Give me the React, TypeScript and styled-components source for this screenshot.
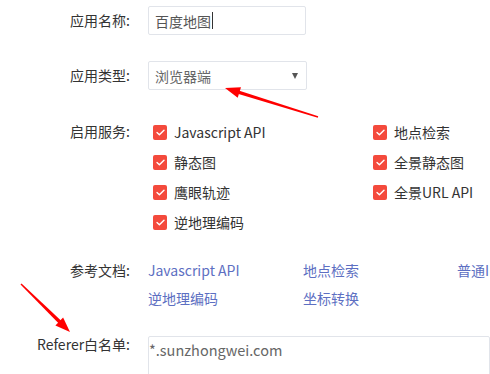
import React from 'react';
import styled, { createGlobalStyle } from 'styled-components';

const GlobalStyle = createGlobalStyle`
  html, body {
    margin: 0;
    padding: 0;
    background: #fff;
    overflow: hidden;
  }
  body {
    font-family: "Noto Sans CJK SC", "Noto Sans", sans-serif;
    font-size: 14px;
    color: #333;
  }
`;

// Layout
const Page = styled.div`
  position: relative;
  width: 490px;
  height: 374px;
  overflow: hidden;
`;

const Form = styled.div`
  display: flex;
  flex-direction: column;
  padding-top: 6px;
`;

const Row = styled.div<{ $gap?: number }>`
  display: flex;
  align-items: flex-start;
  gap: 18px;
  margin-top: ${p => p.$gap ?? 0}px;
`;

const Label = styled.div<{ $lh: number }>`
  width: 130px;
  flex-shrink: 0;
  text-align: right;
  line-height: ${p => p.$lh}px;
  color: #333;
  white-space: nowrap;
`;

// Controls
const TextBox = styled.div`
  box-sizing: border-box;
  width: 158px;
  height: 29px;
  border: 1px solid #e1e4ea;
  border-radius: 2px;
  padding: 0 6px;
  display: flex;
  align-items: center;
  color: #555;
`;

const Caret = styled.span`
  display: inline-block;
  width: 1px;
  height: 17px;
  background: #333;
  margin-left: 1px;
`;

const SelectBox = styled(TextBox)`
  width: 159px;
  justify-content: space-between;
  color: #666;
  padding-right: 8px;
`;

const SelectArrow = styled.span`
  width: 0;
  height: 0;
  border-left: 3.5px solid transparent;
  border-right: 3.5px solid transparent;
  border-top: 6px solid #555;
`;

const CheckGrid = styled.div`
  display: grid;
  grid-template-columns: 220px 120px;
  grid-auto-rows: 30px;
  padding-left: 5px;
`;

const CheckItem = styled.label`
  display: flex;
  align-items: center;
  gap: 7px;
  color: #333;
  white-space: nowrap;
`;

const CheckBox = styled.span`
  width: 14px;
  height: 15px;
  border-radius: 2px;
  background: #f44a3c;
  display: flex;
  align-items: center;
  justify-content: center;
`;

const LinkGrid = styled.div`
  display: grid;
  grid-template-columns: 155px 154px 155px;
  grid-auto-rows: 28px;
`;

const DocLink = styled.a`
  color: #5d6fc2;
  text-decoration: none;
  line-height: 28px;
  white-space: nowrap;
`;

const TextArea = styled.div`
  box-sizing: border-box;
  width: 400px;
  height: 80px;
  border: 1px solid #e1e4ea;
  border-radius: 2px;
  padding: 2px 0 0 0;
  color: #666;
  font-size: 14.5px;
  line-height: 22px;
`;

// Annotation arrows drawn over the page
const Overlay = styled.svg`
  position: absolute;
  left: 0;
  top: 0;
  pointer-events: none;
`;

const Check = () => (
  <svg width="9" height="7" viewBox="0 0 9 7">
    <path d="M1 3.6 L3.4 5.8 L8 1.2" fill="none" stroke="#fff" strokeWidth="1.4" strokeLinecap="round" strokeLinejoin="round" />
  </svg>
);

type Pt = [number, number];

const Arrow = ({ from, to }: { from: Pt; to: Pt }) => {
  const dx = to[0] - from[0];
  const dy = to[1] - from[1];
  const len = Math.hypot(dx, dy);
  const ux = dx / len;
  const uy = dy / len;
  const px = -uy;
  const py = ux;
  const head = 15;
  const bx = to[0] - ux * head;
  const by = to[1] - uy * head;
  const pts = (arr: Pt[]) => arr.map(p => p.map(v => v.toFixed(1)).join(',')).join(' ');
  const shaft: Pt[] = [
    [from[0] + px * 0.7, from[1] + py * 0.7],
    [bx + ux * 2 + px * 1.8, by + uy * 2 + py * 1.8],
    [bx + ux * 2 - px * 1.8, by + uy * 2 - py * 1.8],
    [from[0] - px * 0.7, from[1] - py * 0.7],
  ];
  const tip: Pt[] = [
    to,
    [bx + px * 5.5, by + py * 5.5],
    [bx - px * 5.5, by - py * 5.5],
  ];
  return (
    <g fill="#ff0000">
      <polygon points={pts(shaft)} />
      <polygon points={pts(tip)} />
    </g>
  );
};

const services = [
  'Javascript API', '地点检索',
  '静态图', '全景静态图',
  '鹰眼轨迹', '全景URL API',
  '逆地理编码',
];

const docs = ['Javascript API', '地点检索', '普通IP定位', '逆地理编码', '坐标转换'];

const App: React.FC = () => {
  return (
    <Page>
      <GlobalStyle />
      <Form>
        <Row>
          <Label $lh={29}>应用名称:</Label>
          <TextBox>
            百度地图
            <Caret />
          </TextBox>
        </Row>

        <Row $gap={26}>
          <Label $lh={29}>应用类型:</Label>
          <SelectBox>
            浏览器端
            <SelectArrow />
          </SelectBox>
        </Row>

        <Row $gap={27}>
          <Label $lh={28}>启用服务:</Label>
          <CheckGrid>
            {services.map(s => (
              <CheckItem key={s}>
                <CheckBox>
                  <Check />
                </CheckBox>
                {s}
              </CheckItem>
            ))}
          </CheckGrid>
        </Row>

        <Row $gap={19}>
          <Label $lh={28}>参考文档:</Label>
          <LinkGrid>
            {docs.map(d => (
              <DocLink key={d} href="#">
                {d}
              </DocLink>
            ))}
          </LinkGrid>
        </Row>

        <Row $gap={24}>
          <Label $lh={16}>Referer白名单:</Label>
          <TextArea>*.sunzhongwei.com</TextArea>
        </Row>
      </Form>

      <Overlay width="490" height="374" viewBox="0 0 490 374">
        <Arrow from={[318, 117]} to={[225, 88]} />
        <Arrow from={[21, 284]} to={[70, 332]} />
      </Overlay>
    </Page>
  );
};

export default App;
